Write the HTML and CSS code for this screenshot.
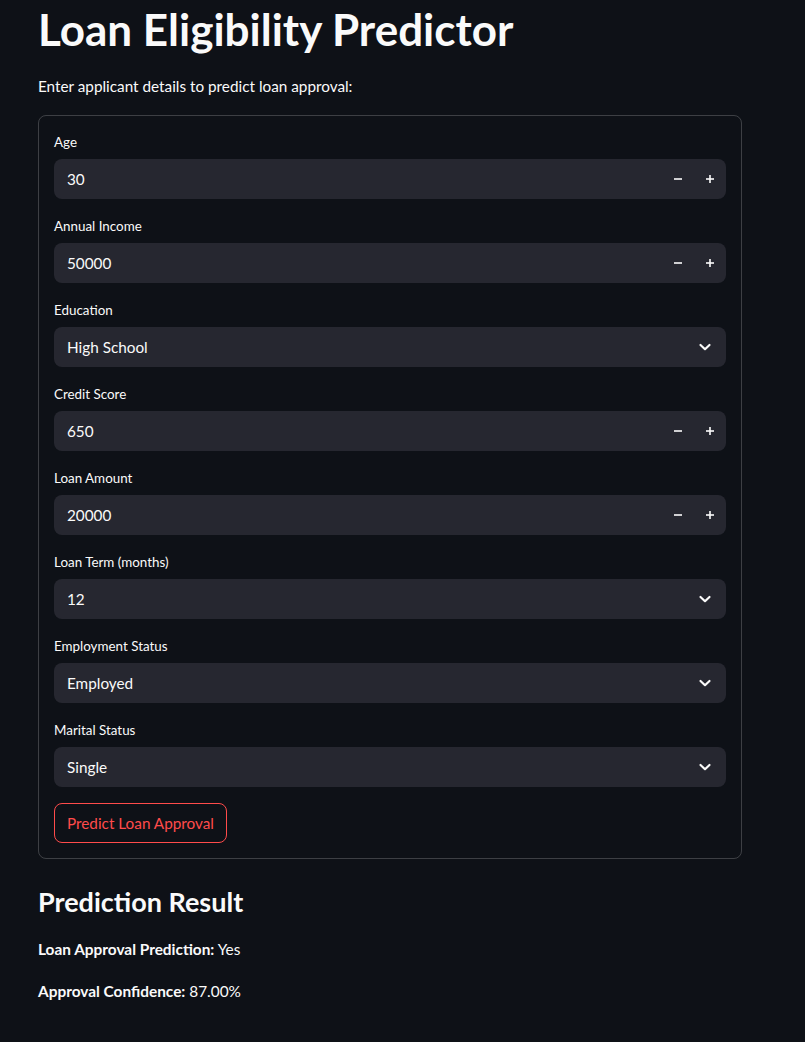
FILE: index.html
```html
<!DOCTYPE html>
<html lang="en">
<head>
<meta charset="utf-8">
<title>Loan Eligibility Predictor</title>
<link rel="stylesheet" href="styles.css">
</head>
<body>
<main class="app">
  <h1 class="title">Loan Eligibility Predictor</h1>
  <p class="intro">Enter applicant details to predict loan approval:</p>

  <form class="form">
    <div class="field">
      <label class="label">Age</label>
      <div class="control">
        <span class="value">30</span>
        <span class="step"><svg width="10" height="10" viewBox="0 0 10 10"><rect x="1" y="4.2" width="8" height="1.6" fill="#fafafa"/></svg></span>
        <span class="step"><svg width="10" height="10" viewBox="0 0 10 10"><rect x="1" y="4.2" width="8" height="1.6" fill="#fafafa"/><rect x="4.2" y="1" width="1.6" height="8" fill="#fafafa"/></svg></span>
      </div>
    </div>
    <div class="field">
      <label class="label">Annual Income</label>
      <div class="control">
        <span class="value">50000</span>
        <span class="step"><svg width="10" height="10" viewBox="0 0 10 10"><rect x="1" y="4.2" width="8" height="1.6" fill="#fafafa"/></svg></span>
        <span class="step"><svg width="10" height="10" viewBox="0 0 10 10"><rect x="1" y="4.2" width="8" height="1.6" fill="#fafafa"/><rect x="4.2" y="1" width="1.6" height="8" fill="#fafafa"/></svg></span>
      </div>
    </div>
    <div class="field">
      <label class="label">Education</label>
      <div class="control select">
        <span class="value">High School</span>
        <span class="chev"><svg width="14" height="10" viewBox="0 0 14 10"><path d="M2.5 3 L7 7.2 L11.5 3" fill="none" stroke="#fafafa" stroke-width="2.2" stroke-linecap="round" stroke-linejoin="round"/></svg></span>
      </div>
    </div>
    <div class="field">
      <label class="label">Credit Score</label>
      <div class="control">
        <span class="value">650</span>
        <span class="step"><svg width="10" height="10" viewBox="0 0 10 10"><rect x="1" y="4.2" width="8" height="1.6" fill="#fafafa"/></svg></span>
        <span class="step"><svg width="10" height="10" viewBox="0 0 10 10"><rect x="1" y="4.2" width="8" height="1.6" fill="#fafafa"/><rect x="4.2" y="1" width="1.6" height="8" fill="#fafafa"/></svg></span>
      </div>
    </div>
    <div class="field">
      <label class="label">Loan Amount</label>
      <div class="control">
        <span class="value">20000</span>
        <span class="step"><svg width="10" height="10" viewBox="0 0 10 10"><rect x="1" y="4.2" width="8" height="1.6" fill="#fafafa"/></svg></span>
        <span class="step"><svg width="10" height="10" viewBox="0 0 10 10"><rect x="1" y="4.2" width="8" height="1.6" fill="#fafafa"/><rect x="4.2" y="1" width="1.6" height="8" fill="#fafafa"/></svg></span>
      </div>
    </div>
    <div class="field">
      <label class="label">Loan Term (months)</label>
      <div class="control select">
        <span class="value">12</span>
        <span class="chev"><svg width="14" height="10" viewBox="0 0 14 10"><path d="M2.5 3 L7 7.2 L11.5 3" fill="none" stroke="#fafafa" stroke-width="2.2" stroke-linecap="round" stroke-linejoin="round"/></svg></span>
      </div>
    </div>
    <div class="field">
      <label class="label">Employment Status</label>
      <div class="control select">
        <span class="value">Employed</span>
        <span class="chev"><svg width="14" height="10" viewBox="0 0 14 10"><path d="M2.5 3 L7 7.2 L11.5 3" fill="none" stroke="#fafafa" stroke-width="2.2" stroke-linecap="round" stroke-linejoin="round"/></svg></span>
      </div>
    </div>
    <div class="field">
      <label class="label">Marital Status</label>
      <div class="control select">
        <span class="value">Single</span>
        <span class="chev"><svg width="14" height="10" viewBox="0 0 14 10"><path d="M2.5 3 L7 7.2 L11.5 3" fill="none" stroke="#fafafa" stroke-width="2.2" stroke-linecap="round" stroke-linejoin="round"/></svg></span>
      </div>
    </div>
    <div class="actions">
      <button type="button" class="btn">Predict Loan Approval</button>
    </div>
  </form>

  <h3 class="result-title">Prediction Result</h3>
  <p class="result"><strong>Loan Approval Prediction:</strong> Yes</p>
  <p class="result"><strong>Approval Confidence:</strong> 87.00%</p>
</main>
</body>
</html>
```
FILE: styles.css
```css
html, body {
  margin: 0;
  padding: 0;
  background: #0e1117;
}
body {
  color: #fafafa;
  font-family: Lato, "Noto Sans", sans-serif;
}
.app {
  width: 704px;
  margin-left: 38px;
  padding-top: 3px;
}
.title {
  margin: 0;
  font-size: 44px;
  font-weight: 700;
  line-height: 52px;
}
.intro {
  margin: 19px 0 0;
  font-size: 15.3px;
  line-height: 24px;
}
.form {
  margin-top: 17px;
  border: 1px solid rgba(250, 250, 250, 0.2);
  border-radius: 8px;
  padding: 15px;
  display: flex;
  flex-direction: column;
  gap: 16px;
}
.field {
  display: flex;
  flex-direction: column;
}
.label {
  font-size: 13.4px;
  line-height: 22px;
  min-height: 24px;
  margin-bottom: 4px;
}
.control {
  height: 40px;
  background: #262730;
  border-radius: 8px;
  display: flex;
  align-items: center;
  padding-left: 13px;
}
.value {
  flex: 1;
  font-size: 15.3px;
}
.step {
  width: 32px;
  height: 40px;
  display: flex;
  align-items: center;
  justify-content: center;
}
.select {
  padding-right: 14px;
}
.chev {
  display: flex;
  align-items: center;
}
.actions {
  display: flex;
}
.btn {
  height: 40px;
  padding: 0 12px;
  background: transparent;
  border: 1px solid #ff4b4b;
  border-radius: 8px;
  color: #ff4b4b;
  font-family: inherit;
  font-size: 15.3px;
}
.result-title {
  margin: 25px 0 0;
  font-size: 27px;
  font-weight: 700;
  line-height: 36px;
}
.result {
  margin: 17px 0 0;
  font-size: 15.4px;
  line-height: 24px;
}
.result + .result {
  margin-top: 18px;
}
```
